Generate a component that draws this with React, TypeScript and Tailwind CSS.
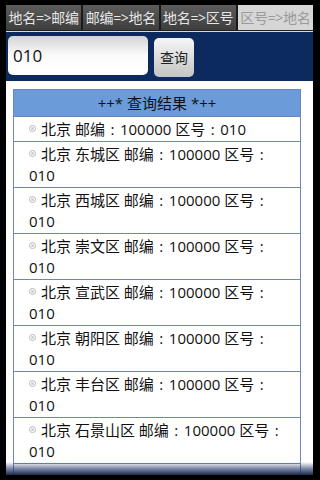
import React from "react";

const places = ["", "东城区", "西城区", "崇文区", "宣武区", "朝阳区", "丰台区", "石景山区"];

const tabs = ["地名=>邮编", "邮编=>地名", "地名=>区号", "区号=>地名"];

function Bullet() {
  return (
    <span className="inline-flex items-center justify-center w-[7px] h-[7px] rounded-full border border-[#b8b8b8] mr-[5px] align-middle relative -top-[2px]">
      <span className="w-[3px] h-[3px] rounded-full bg-[#cccccc]" />
    </span>
  );
}

function Colon() {
  return <span className="inline-block w-[15px] text-center">:</span>;
}

export default function App() {
  return (
    <div
      className="w-[320px] h-[480px] bg-black pl-[6px] pt-[5px] overflow-hidden"
      style={{ fontFamily: '"Open Sans", "Noto Sans CJK SC", sans-serif' }}
    >
      <div className="relative w-[307px] h-[470px] overflow-hidden bg-white flex flex-col">
        <div className="shrink-0 flex gap-[2px] h-[25px] bg-[#1a1a1a]">
          {tabs.map((t, i) => (
            <div
              key={t}
              className={
                i === 3
                  ? "flex-1 flex items-center justify-center bg-[#d6d6d6] text-[#9a9a9a] text-[14px] tracking-[-0.3px]"
                  : "flex-1 flex items-center justify-center bg-gradient-to-b from-[#5c5c5c] to-[#3e3e3e] text-[#e6e6e6] text-[14px] tracking-[-0.3px]"
              }
            >
              {t}
            </div>
          ))}
        </div>
        <div className="shrink-0 h-[1px] bg-[#202020]" />
        <div className="shrink-0 h-[1px] bg-[#d8d8d8]" />
        <div className="shrink-0 h-[49px] bg-[#0c2a5e] flex items-start pl-[2px] pt-[4px] gap-[6px]">
          <div className="w-[140px] h-[39px] rounded-[5px] bg-gradient-to-b from-[#d4d4d4] via-[#fbfbfb] to-white flex items-center pl-[5px] text-[17px] text-[#111]">
            010
          </div>
          <div className="mt-[2px] w-[40px] h-[39px] rounded-[5px] bg-gradient-to-b from-[#f6f6f6] to-[#c4c4c4] flex items-center justify-center text-[14px] text-[#222]">
            查询
          </div>
        </div>
        <div className="flex-1 min-h-0 bg-white pt-[8px] pl-[7px]">
          <div className="w-[288px] border-x border-t border-[#6f84c4]">
            <div className="h-[26px] bg-[#6b9bd9] flex items-center justify-center text-[15px] text-[#111]">
              ++* 查询结果 *++
            </div>
            {places.map((p) => (
              <div
                key={p || "bj"}
                className="border-t border-[#6f84c4] pl-[15px] pr-[8px] pt-[2px] pb-[1px] text-[15px] leading-[21px] text-[#111]"
              >
                <Bullet />
                北京 {p ? p + " " : ""}邮编
                <Colon />
                100000 区号
                <Colon />
                010
              </div>
            ))}
            <div className="border-t border-[#6f84c4] h-[30px]" />
          </div>
        </div>
        <div className="absolute left-0 right-0 bottom-0 h-[13px] bg-gradient-to-b from-[rgba(40,60,110,0)] via-[rgba(40,60,110,0.6)] to-[#1c2a4a]" />
      </div>
    </div>
  );
}
